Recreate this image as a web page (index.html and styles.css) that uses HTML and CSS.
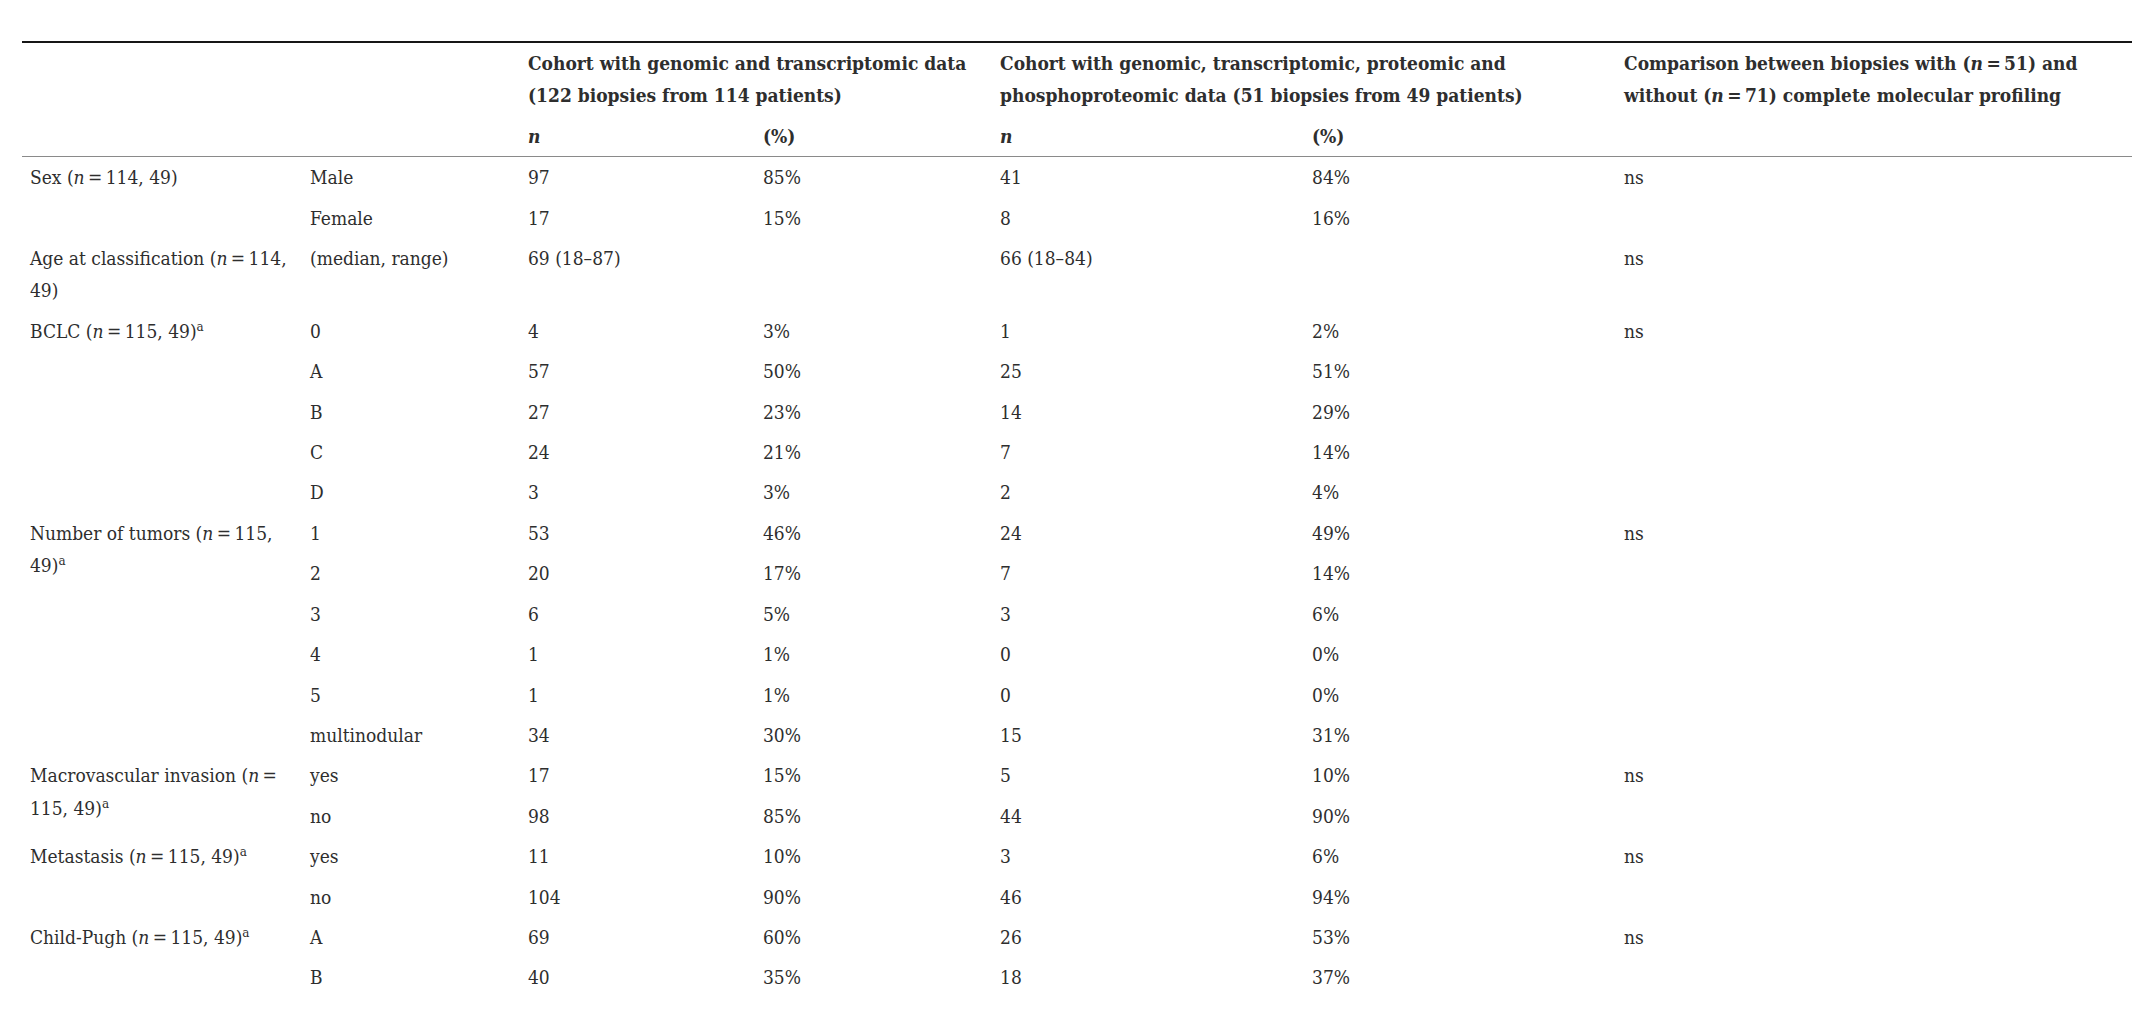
FILE: index.html
```html
<!DOCTYPE html>
<html lang="en">
<head>
<meta charset="utf-8">
<title>Cohort characteristics</title>
<link rel="stylesheet" href="styles.css">
</head>
<body>
<div class="wrap">
<table class="cohort">
  <colgroup>
    <col class="c-var"><col class="c-cat"><col class="c-n1"><col class="c-p1"><col class="c-n2"><col class="c-p2"><col class="c-cmp">
  </colgroup>
  <thead>
    <tr>
      <td></td>
      <td></td>
      <th colspan="2">Cohort with genomic and transcriptomic data (122 biopsies from 114 patients)</th>
      <th colspan="2">Cohort with genomic, transcriptomic, proteomic and phosphoproteomic data (51 biopsies from 49 patients)</th>
      <th>Comparison between biopsies with (<i>n</i>&thinsp;=&thinsp;51) and without (<i>n</i>&thinsp;=&thinsp;71) complete molecular profiling</th>
    </tr>
    <tr class="sub">
      <td></td>
      <td></td>
      <th><i>n</i></th>
      <th>(%)</th>
      <th><i>n</i></th>
      <th>(%)</th>
      <th></th>
    </tr>
  </thead>
  <tbody>
    <tr><td rowspan="2">Sex (<i>n</i>&thinsp;=&thinsp;114, 49)</td><td>Male</td><td>97</td><td>85%</td><td>41</td><td>84%</td><td rowspan="2">ns</td></tr>
    <tr><td>Female</td><td>17</td><td>15%</td><td>8</td><td>16%</td></tr>
    <tr><td>Age at classification (<i>n</i>&thinsp;=&thinsp;114, 49)</td><td>(median, range)</td><td>69 (18–87)</td><td></td><td>66 (18–84)</td><td></td><td>ns</td></tr>
    <tr><td rowspan="5">BCLC (<i>n</i>&thinsp;=&thinsp;115, 49)<sup>a</sup></td><td>0</td><td>4</td><td>3%</td><td>1</td><td>2%</td><td rowspan="5">ns</td></tr>
    <tr><td>A</td><td>57</td><td>50%</td><td>25</td><td>51%</td></tr>
    <tr><td>B</td><td>27</td><td>23%</td><td>14</td><td>29%</td></tr>
    <tr><td>C</td><td>24</td><td>21%</td><td>7</td><td>14%</td></tr>
    <tr><td>D</td><td>3</td><td>3%</td><td>2</td><td>4%</td></tr>
    <tr><td rowspan="6">Number of tumors (<i>n</i>&thinsp;=&thinsp;115, 49)<sup>a</sup></td><td>1</td><td>53</td><td>46%</td><td>24</td><td>49%</td><td rowspan="6">ns</td></tr>
    <tr><td>2</td><td>20</td><td>17%</td><td>7</td><td>14%</td></tr>
    <tr><td>3</td><td>6</td><td>5%</td><td>3</td><td>6%</td></tr>
    <tr><td>4</td><td>1</td><td>1%</td><td>0</td><td>0%</td></tr>
    <tr><td>5</td><td>1</td><td>1%</td><td>0</td><td>0%</td></tr>
    <tr><td>multinodular</td><td>34</td><td>30%</td><td>15</td><td>31%</td></tr>
    <tr><td rowspan="2">Macrovascular invasion (<i>n</i>&thinsp;=&thinsp;115, 49)<sup>a</sup></td><td>yes</td><td>17</td><td>15%</td><td>5</td><td>10%</td><td rowspan="2">ns</td></tr>
    <tr><td>no</td><td>98</td><td>85%</td><td>44</td><td>90%</td></tr>
    <tr><td rowspan="2">Metastasis (<i>n</i>&thinsp;=&thinsp;115, 49)<sup>a</sup></td><td>yes</td><td>11</td><td>10%</td><td>3</td><td>6%</td><td rowspan="2">ns</td></tr>
    <tr><td>no</td><td>104</td><td>90%</td><td>46</td><td>94%</td></tr>
    <tr><td rowspan="2">Child-Pugh (<i>n</i>&thinsp;=&thinsp;115, 49)<sup>a</sup></td><td>A</td><td>69</td><td>60%</td><td>26</td><td>53%</td><td rowspan="2">ns</td></tr>
    <tr><td>B</td><td>40</td><td>35%</td><td>18</td><td>37%</td></tr>
  </tbody>
</table>
</div>
</body>
</html>
```
FILE: styles.css
```css
html, body {
  margin: 0;
  padding: 0;
  background: #ffffff;
  overflow: hidden;
}

body {
  color: #2e2e2e;
  font-family: "DejaVu Serif Condensed", "DejaVu Serif", serif;
  font-size: 19px;
}

.wrap {
  padding: 41px 0 0 22px;
}

.cohort {
  border-collapse: collapse;
  table-layout: fixed;
  width: 2110px;
  border-top: 2px solid #161616;
}

.c-var { width: 280px; }
.c-cat { width: 218px; }
.c-n1 { width: 235px; }
.c-p1 { width: 237px; }
.c-n2 { width: 312px; }
.c-p2 { width: 312px; }
.c-cmp { width: 516px; }

.cohort td,
.cohort th {
  padding: 4px 8px;
  line-height: 32.4px;
  vertical-align: top;
  text-align: left;
  font-weight: normal;
}

.cohort thead th {
  font-weight: bold;
}

.cohort thead tr.sub td,
.cohort thead tr.sub th {
  border-bottom: 1px solid #8a8a8a;
}

.cohort sup {
  font-size: 0.7em;
  line-height: 0;
  vertical-align: 0.5em;
}
```
